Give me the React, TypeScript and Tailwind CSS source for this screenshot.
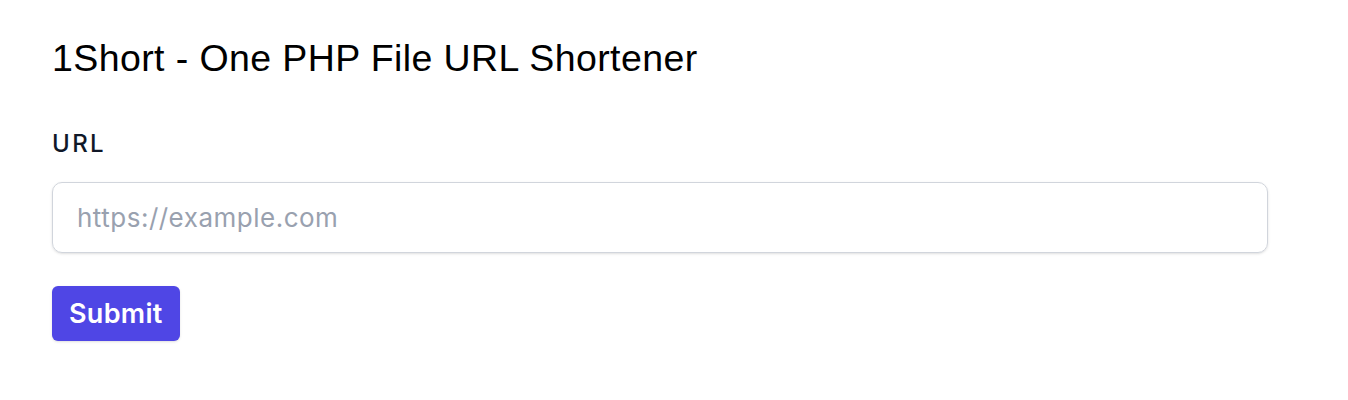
export default function App() {
  return (
    <div className="min-h-[400px] bg-white px-[52px] pt-[36px] font-['Inter',sans-serif]">
      <h1 className="font-['Liberation_Sans',Arial,sans-serif] text-[37.5px] leading-[45px] tracking-[0.4px] text-black">
        1Short - One PHP File URL Shortener
      </h1>
      <form className="mt-[47px] w-[1216px]" onSubmit={(e) => e.preventDefault()}>
        <label
          htmlFor="url"
          className="block text-[24px] leading-[32px] font-medium tracking-[2.4px] text-gray-900"
        >
          URL
        </label>
        <input
          id="url"
          type="url"
          placeholder="https://example.com"
          className="mt-[22px] block h-[71px] w-full rounded-[10px] border border-gray-300 px-[24px] text-[26px] tracking-[0.5px] text-gray-900 shadow-sm outline-none placeholder:text-gray-400"
        />
        <button
          type="submit"
          className="mt-[33px] h-[55px] rounded-[6px] bg-[#4f46e5] px-[17px] text-[27px] leading-[35px] font-semibold tracking-[0.3px] text-white shadow-sm"
        >
          Submit
        </button>
      </form>
    </div>
  )
}
